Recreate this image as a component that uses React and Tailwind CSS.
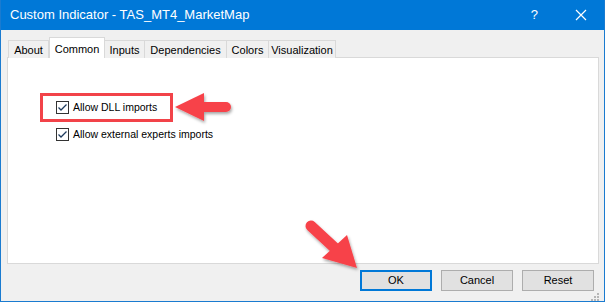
import React from 'react';

const tabs = [
  { label: 'About', w: 'w-[41px]' },
  { label: 'Common', w: 'w-[56px]', active: true },
  { label: 'Inputs', w: 'w-[40px]' },
  { label: 'Dependencies', w: 'w-[82px]' },
  { label: 'Colors', w: 'w-[42px]' },
  { label: 'Visualization', w: 'w-[67px]' },
];

const Checkbox = ({ label }) => (
  <label className="flex items-center gap-[4px] h-[13px]">
    <span className="w-[13px] h-[13px] border border-[#333333] bg-white flex items-center justify-center shrink-0">
      <svg width="11" height="11" viewBox="0 0 11 11">
        <path d="M1.5 5.5 L4 8 L9.5 2.5" fill="none" stroke="#1f3b5e" strokeWidth="1.3" />
      </svg>
    </span>
    <span className="text-[10.5px] leading-none text-black whitespace-nowrap">{label}</span>
  </label>
);

const Button = ({ children, primary }) => (
  <button
    className={`w-[72px] h-[21px] text-[11px] text-black bg-[#e1e1e1] flex items-center justify-center ${
      primary ? 'border-2 border-[#0078d7]' : 'border border-[#adadad]'
    }`}
  >
    {children}
  </button>
);

export default function App() {
  return (
    <div
      className="relative w-[605px] h-[302px] bg-[#f0f0f0] border-x border-b border-[#1a7bd0] flex flex-col overflow-hidden"
      style={{ fontFamily: '"Liberation Sans", Arial, sans-serif' }}
    >
      {/* title bar */}
      <div className="h-[30px] -mx-px bg-[#0078d7] flex items-center text-white shrink-0">
        <span className="pl-[10px] text-[13px]">Custom Indicator - TAS_MT4_MarketMap</span>
        <span className="ml-auto text-[13px] mr-[37px]">?</span>
        <svg width="12" height="12" viewBox="0 0 12 12" className="mr-[18px]">
          <path d="M1 1 L11 11 M11 1 L1 11" stroke="white" strokeWidth="1.2" />
        </svg>
      </div>

      {/* tabs */}
      <div className="flex items-end h-[20px] mt-[8px] pl-[7px] -mb-px relative z-10">
        {tabs.map((t) =>
          t.active ? (
            <div
              key={t.label}
              className={`${t.w} shrink-0 h-[21px] bg-white border-x border-t border-[#d9d9d9] flex items-start justify-center pt-[3px] text-[11px] text-black whitespace-nowrap`}
            >
              {t.label}
            </div>
          ) : (
            <div
              key={t.label}
              className={`${t.w} shrink-0 h-[18px] bg-[#f0f0f0] border-t border-r border-[#d9d9d9] first:border-l flex items-center justify-center pt-[1px] text-[11px] text-black whitespace-nowrap`}
            >
              {t.label}
            </div>
          )
        )}
      </div>

      {/* panel */}
      <div className="ml-[6px] w-[592px] h-[207px] bg-white border border-[#d9d9d9] shrink-0">
        <div className="pl-[48px] pt-[43px] flex flex-col gap-[14px]">
          <Checkbox label="Allow DLL imports" />
          <Checkbox label="Allow external experts imports" />
        </div>
      </div>

      {/* buttons */}
      <div className="flex justify-end gap-[9px] mt-[6px] pr-[10px]">
        <Button primary>OK</Button>
        <Button>Cancel</Button>
        <Button>Reset</Button>
      </div>

      {/* annotations */}
      <svg className="absolute left-[-1px] top-0 pointer-events-none" width="605" height="302" viewBox="0 0 605 302">
        <defs>
          <filter id="sh" x="-20%" y="-20%" width="140%" height="140%">
            <feDropShadow dx="1" dy="2" stdDeviation="1.5" floodColor="#000" floodOpacity="0.35" />
          </filter>
        </defs>
        <rect x="41.5" y="94.5" width="130" height="26" fill="none" stroke="#f24349" strokeWidth="3" />
        <g filter="url(#sh)" fill="#f7434a">
          <line x1="226" y1="107" x2="200" y2="107" stroke="#f7434a" strokeWidth="10" strokeLinecap="round" />
          <polygon points="175,107 204,93 204,121" />
        </g>
        <g filter="url(#sh)" fill="#f7434a">
          <line x1="311" y1="226" x2="338" y2="251" stroke="#f7434a" strokeWidth="11" strokeLinecap="round" />
          <polygon points="357,268 322,258 347,235" />
        </g>
        <g fill="#b5b5b5">
          <rect x="597" y="293" width="2" height="2" />
          <rect x="594" y="296" width="2" height="2" />
          <rect x="597" y="296" width="2" height="2" />
          <rect x="591" y="299" width="2" height="2" />
          <rect x="594" y="299" width="2" height="2" />
          <rect x="597" y="299" width="2" height="2" />
        </g>
      </svg>
    </div>
  );
}
